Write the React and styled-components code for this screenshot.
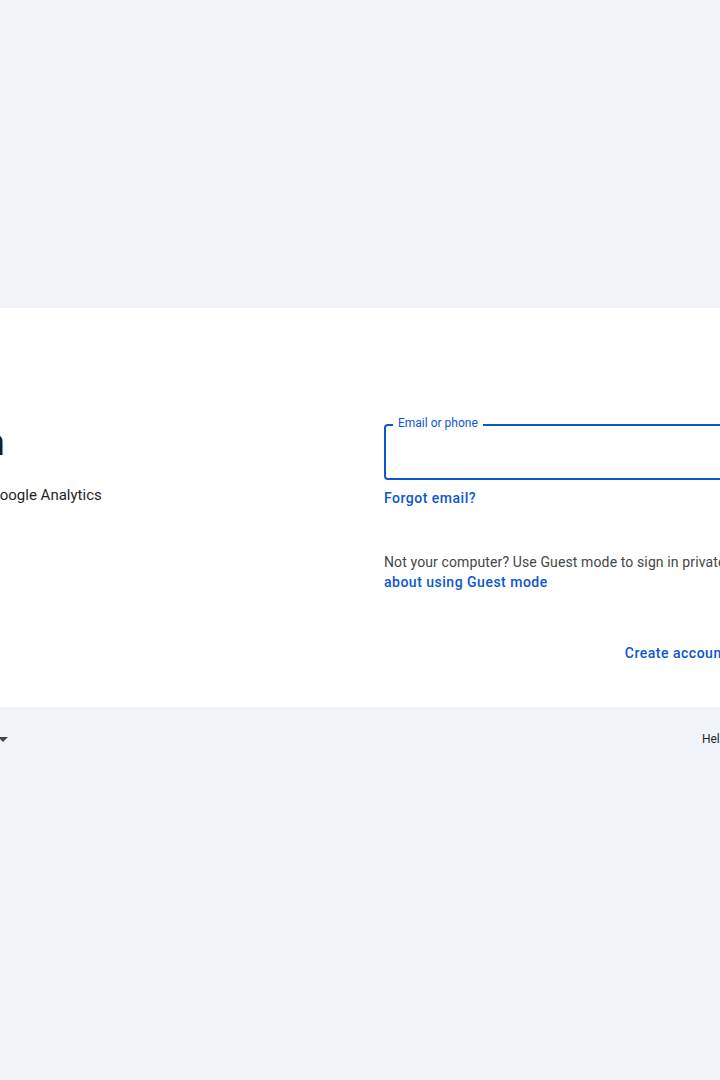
import React from "react";
import styled, { createGlobalStyle } from "styled-components";

const Global = createGlobalStyle`
  html, body { margin: 0; padding: 0; }
  body {
    background: #f0f4f9;
    font-family: Roboto, "Noto Sans", "Liberation Sans", sans-serif;
    color: #1f1f1f;
    -webkit-font-smoothing: antialiased;
  }
`;

const Page = styled.div`
  width: 720px;
  min-height: 100vh;
  overflow: hidden;
  display: flex;
  flex-direction: column;
  justify-content: center;
`;

const Stage = styled.div`
  width: 1000px;
  flex: 0 0 auto;
  margin-left: -142px;
  display: flex;
  flex-direction: column;
`;

const Card = styled.main`
  background: #ffffff;
  border-radius: 28px;
  padding: 36px 36px 34px;
  display: grid;
  grid-template-columns: 490px 1fr;
`;

const LeftCol = styled.div`
  display: flex;
  flex-direction: column;
`;

const Logo = styled.svg`
  width: 48px;
  height: 48px;
  display: block;
`;

const Title = styled.h1`
  margin: 29px 0 0;
  font-size: 36px;
  line-height: 44px;
  font-weight: 400;
  letter-spacing: 0.5px;
  color: #1f1f1f;
  white-space: nowrap;
`;

const Subtitle = styled.div`
  margin-top: 18px;
  font-size: 15px;
  line-height: 24px;
  color: #1f1f1f;
  white-space: nowrap;
`;

const RightCol = styled.div`
  padding-top: 80px;
  display: flex;
  flex-direction: column;
`;

const Field = styled.div`
  position: relative;
  height: 56px;
  box-sizing: border-box;
  border: 2px solid #0b57d0;
  border-radius: 4px;
`;

const FieldLabel = styled.span`
  position: absolute;
  top: -11px;
  left: 7px;
  padding: 0 5px;
  background: #ffffff;
  font-size: 12px;
  line-height: 16px;
  color: #0b57d0;
`;

const LinkButton = styled.a`
  display: inline-block;
  align-self: flex-start;
  margin-top: ${(p) => p.$mt || 0}px;
  font-size: 14px;
  line-height: 20px;
  font-weight: 500;
  color: #0b57d0;
  text-decoration: none;
  letter-spacing: 0.5px;
`;

const Note = styled.p`
  margin: 44px 0 0;
  font-size: 14px;
  line-height: 20px;
  color: #444746;
  white-space: nowrap;
  letter-spacing: 0.12px;
`;

const InlineLink = styled.a`
  color: #0b57d0;
  font-weight: 500;
  text-decoration: none;
  letter-spacing: 0.5px;
`;

const Actions = styled.div`
  margin-top: 41px;
  display: flex;
  justify-content: flex-end;
  align-items: center;
`;

const TextButton = styled.button`
  height: 40px;
  padding: 0 16px;
  border: none;
  background: transparent;
  border-radius: 20px;
  font-family: inherit;
  font-size: 14px;
  font-weight: 500;
  letter-spacing: 0.5px;
  color: #0b57d0;
  cursor: pointer;
`;

const FilledButton = styled(TextButton)`
  padding: 0 24px;
  background: #0b57d0;
  color: #ffffff;
`;

const Footer = styled.footer`
  display: flex;
  justify-content: space-between;
  align-items: center;
  padding: 24px 0 25px;
  font-size: 12px;
  line-height: 16px;
  color: #1f1f1f;
`;

const LangSelect = styled.div`
  display: flex;
  align-items: center;
  gap: 8px;
  padding-left: 10px;
  white-space: nowrap;
`;

const Caret = styled.span`
  width: 0;
  height: 0;
  border-left: 5px solid transparent;
  border-right: 5px solid transparent;
  border-top: 5px solid #444746;
`;

const FooterLinks = styled.nav`
  display: flex;
  gap: 32px;
  margin-right: -5px;
`;

const FooterLink = styled.a`
  color: #1f1f1f;
  text-decoration: none;
`;

function GoogleLogo() {
  return (
    <Logo viewBox="0 0 48 48" aria-hidden="true">
      <path fill="#EA4335" d="M24 9.5c3.54 0 6.71 1.22 9.21 3.6l6.85-6.85C35.9 2.38 30.47 0 24 0 14.62 0 6.51 5.38 2.56 13.22l7.98 6.19C12.43 13.72 17.74 9.5 24 9.5z" />
      <path fill="#4285F4" d="M46.98 24.55c0-1.57-.15-3.09-.38-4.55H24v9.02h12.94c-.58 2.96-2.26 5.48-4.78 7.18l7.73 6c4.51-4.18 7.09-10.36 7.09-17.65z" />
      <path fill="#FBBC05" d="M10.53 28.59c-.48-1.45-.76-2.99-.76-4.59s.27-3.14.76-4.59l-7.98-6.19C.92 16.46 0 20.12 0 24c0 3.88.92 7.54 2.56 10.78l7.97-6.19z" />
      <path fill="#34A853" d="M24 48c6.48 0 11.93-2.13 15.89-5.81l-7.73-6c-2.15 1.45-4.92 2.3-8.16 2.3-6.26 0-11.57-4.22-13.47-9.91l-7.98 6.19C6.51 42.62 14.62 48 24 48z" />
    </Logo>
  );
}

export default function App() {
  return (
    <>
      <Global />
      <Page>
        <Stage>
          <Card>
            <LeftCol>
              <GoogleLogo />
              <Title>Sign in</Title>
              <Subtitle>to continue to Google Analytics</Subtitle>
            </LeftCol>
            <RightCol>
              <Field>
                <FieldLabel>Email or phone</FieldLabel>
              </Field>
              <LinkButton href="#" $mt={8}>Forgot email?</LinkButton>
              <Note>
                Not your computer? Use Guest mode to sign in privately. Learn more
                <br />
                <InlineLink href="#">about using Guest mode</InlineLink>
              </Note>
              <Actions>
                <TextButton>Create account</TextButton>
                <FilledButton>Next</FilledButton>
              </Actions>
            </RightCol>
          </Card>
          <Footer>
            <LangSelect>
              <span>English (United States)</span>
              <Caret />
            </LangSelect>
            <FooterLinks>
              <FooterLink href="#">Help</FooterLink>
              <FooterLink href="#">Privacy</FooterLink>
              <FooterLink href="#">Terms</FooterLink>
            </FooterLinks>
          </Footer>
        </Stage>
      </Page>
    </>
  );
}
